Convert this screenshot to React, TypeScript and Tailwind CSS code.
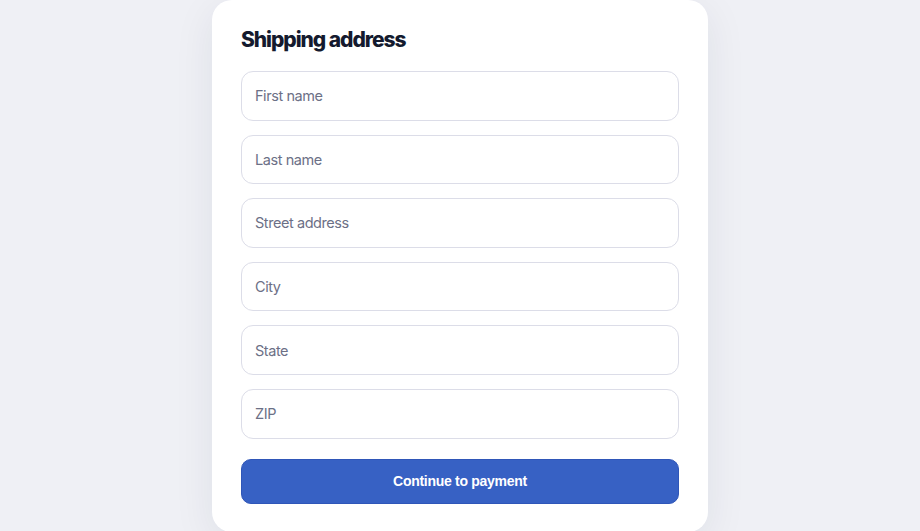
const fields = ['First name', 'Last name', 'Street address', 'City', 'State', 'ZIP']

export default function App() {
  return (
    <div className="flex min-h-[531px] w-full justify-center overflow-hidden bg-[#eff0f5] font-['Inter',sans-serif]">
      <div className="w-[496px] rounded-[20px] bg-white px-[29px] pb-[28px] pt-[26px] shadow-[0_10px_40px_rgba(30,35,70,0.08)]">
        <h1 className="text-[21px] font-extrabold leading-[28px] tracking-[-0.05em] text-[#141a2e]">
          Shipping address
        </h1>
        <form className="mt-[17px] flex flex-col gap-[14px]">
          {fields.map((f) => (
            <input
              key={f}
              type="text"
              placeholder={f}
              className="h-[49.6px] w-full rounded-[12px] border-[1.5px] border-[#dcdde8] bg-white px-[13px] text-[14.5px] tracking-[-0.03em] text-[#141a2e] outline-none placeholder:text-[#6c7086]"
            />
          ))}
          <button
            type="button"
            className="mt-[6px] h-[45px] w-full rounded-[10px] border border-[#2f56b8] bg-[#3761c4] font-['Liberation_Sans',Arial,sans-serif] text-[14px] font-bold tracking-[-0.02em] text-white"
          >
            Continue to payment
          </button>
        </form>
      </div>
    </div>
  )
}
